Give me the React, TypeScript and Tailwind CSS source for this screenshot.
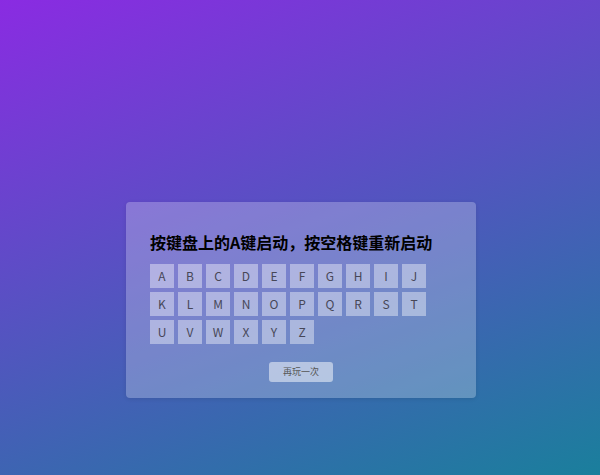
const ROWS = [
  ['A', 'B', 'C', 'D', 'E', 'F', 'G', 'H', 'I', 'J'],
  ['K', 'L', 'M', 'N', 'O', 'P', 'Q', 'R', 'S', 'T'],
  ['U', 'V', 'W', 'X', 'Y', 'Z'],
];

export default function App() {
  return (
    <div
      className="w-full h-[475px] flex justify-center pt-[202px] pl-[2px] bg-[linear-gradient(160deg,#8a2be2,#1a7f9c)]"
      style={{ fontFamily: '"Noto Sans CJK SC", "Noto Sans", sans-serif' }}
    >
      <div className="w-[350px] h-[196px] rounded-[4px] bg-white/25 shadow-[0_1px_4px_rgba(0,0,0,0.1)] px-6 pt-[28px]">
        {/* title */}
        <h1 className="text-[16px] leading-6 font-bold text-black">
          按键盘上的A键启动，按空格键重新启动
        </h1>

        {/* letter keys */}
        <div className="mt-[10px] flex flex-col gap-1">
          {ROWS.map((row, i) => (
            <div key={i} className="flex gap-1">
              {row.map((k) => (
                <div
                  key={k}
                  className="w-6 h-6 flex items-center justify-center bg-white/40 text-[12px] text-[#474757]"
                >
                  {k}
                </div>
              ))}
            </div>
          ))}
        </div>

        <div className="mt-[18px] flex justify-center">
          <button className="w-16 h-5 rounded-[3px] bg-white/50 text-[9px] text-[#555]">
            再玩一次
          </button>
        </div>
      </div>
    </div>
  );
}
